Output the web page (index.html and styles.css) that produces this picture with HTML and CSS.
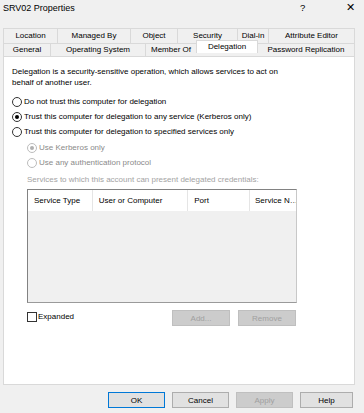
FILE: index.html
```html
<!DOCTYPE html>
<html lang="en">
<head>
    <meta charset="UTF-8">
    <title>SRV02 Properties</title>
    <link rel="stylesheet" href="styles.css">
</head>
<body>
    <div class="window">
        <div class="title-bar">
            <span class="title">SRV02 Properties</span>
            <span class="title-help">?</span>
            <span class="title-close">&#x2715;</span>
        </div>

        <div class="tabs">
            <div class="tab-row">
                <div class="tab w-location">Location</div>
                <div class="tab w-managed">Managed By</div>
                <div class="tab w-object">Object</div>
                <div class="tab w-security">Security</div>
                <div class="tab w-dialin">Dial-in</div>
                <div class="tab w-attr">Attribute Editor</div>
            </div>
            <div class="tab-row">
                <div class="tab w-general">General</div>
                <div class="tab w-os">Operating System</div>
                <div class="tab w-member">Member Of</div>
                <div class="tab w-deleg active">Delegation</div>
                <div class="tab w-pwd">Password Replication</div>
            </div>
        </div>

        <div class="panel">
            <p class="intro">Delegation is a security-sensitive operation, which allows services to act on behalf of another user.</p>

            <div class="options">
                <div class="radio"><span class="dot"></span>Do not trust this computer for delegation</div>
                <div class="radio"><span class="dot checked"></span>Trust this computer for delegation to any service (Kerberos only)</div>
                <div class="radio"><span class="dot"></span>Trust this computer for delegation to specified services only</div>
            </div>

            <div class="sub-options">
                <div class="radio disabled"><span class="dot checked"></span>Use Kerberos only</div>
                <div class="radio disabled"><span class="dot"></span>Use any authentication protocol</div>
            </div>

            <div class="list-label">Services to which this account can present delegated credentials:</div>
            <div class="list">
                <div class="list-head">
                    <div class="col c-type">Service Type</div>
                    <div class="col c-user">User or Computer</div>
                    <div class="col c-port">Port</div>
                    <div class="col c-name">Service N&#8230;</div>
                </div>
            </div>

            <div class="list-actions">
                <label class="check"><span class="box"></span>Expanded</label>
                <div class="list-buttons">
                    <button class="btn disabled">Add...</button>
                    <button class="btn disabled">Remove</button>
                </div>
            </div>
        </div>

        <div class="footer">
            <button class="btn default">OK</button>
            <button class="btn">Cancel</button>
            <button class="btn disabled">Apply</button>
            <button class="btn">Help</button>
        </div>
    </div>
</body>
</html>
```

FILE: styles.css
```css
* {
    margin: 0;
    padding: 0;
    box-sizing: border-box;
}

body {
    background: #f0f0f0;
    font-family: 'Liberation Sans', Arial, sans-serif;
    font-size: 8px;
    color: #000;
}

.window {
    width: 364px;
    height: 413px;
}

/* title bar */
.title-bar {
    display: flex;
    align-items: center;
    height: 15px;
    padding-left: 3px;
}

.title {
    flex: 1;
    font-size: 9px;
}

.title-help {
    width: 16px;
    font-size: 9.5px;
    margin-right: 30px;
}

.title-close {
    width: 18px;
    font-size: 11px;
}

/* tabs */
.tabs {
    margin: 13px 9px 0 3px;
}

.tab-row {
    display: flex;
}

.tab {
    height: 15px;
    line-height: 13px;
    text-align: center;
    border: 1px solid #d9d9d9;
    border-right: none;
    border-bottom: none;
    background: #f0f0f0;
    white-space: nowrap;
}

.tab:last-child {
    border-right: 1px solid #d9d9d9;
}

.tab-row + .tab-row .tab {
    height: 13px;
    line-height: 12px;
}

.tab.active {
    position: relative;
    z-index: 2;
    height: 17px;
    margin-top: -3px;
    line-height: 13px;
    background: #fff;
    border-right: 1px solid #d9d9d9;
}

.tab.active + .tab {
    border-left: none;
}

.w-location { width: 54px; }
.w-managed { width: 73px; }
.w-object { width: 47px; }
.w-security { width: 60px; }
.w-dialin { width: 31px; }
.w-attr { width: 87px; }

.w-general { width: 47px; }
.w-os { width: 95px; }
.w-member { width: 51px; }
.w-deleg { width: 62px; }
.w-pwd { width: 97px; }

/* panel */
.panel {
    position: relative;
    margin: 0 9px 0 3px;
    height: 329px;
    background: #fff;
    border: 1px solid #d9d9d9;
    padding: 9px 8px 0 8px;
}

.intro {
    line-height: 11px;
    width: 280px;
}

.options {
    margin-top: 6px;
}

.radio {
    display: flex;
    align-items: center;
    height: 15px;
}

.dot {
    width: 10px;
    height: 10px;
    border: 1px solid #333;
    border-radius: 50%;
    margin-right: 2px;
    display: flex;
    align-items: center;
    justify-content: center;
}

.dot.checked::after {
    content: '';
    width: 4px;
    height: 4px;
    border-radius: 50%;
    background: #000;
}

.sub-options {
    margin-top: 1px;
    padding-left: 15px;
}

.radio.disabled {
    color: #8a8a8a;
}

.radio.disabled .dot {
    border-color: #bcbcbc;
}

.radio.disabled .dot.checked::after {
    background: #b0b0b0;
}

.list-label {
    margin-top: 5px;
    padding-left: 15px;
    color: #a3a3a3;
    height: 11px;
}

.list {
    margin: 3px 0 0 15px;
    width: 270px;
    height: 114px;
    border: 1px solid #828282;
    border-color: #828282 #c8c8c8 #9a9a9a #828282;
    background: #f0f0f0;
    overflow: hidden;
}

.list-head {
    display: flex;
    height: 21px;
    background: #fff;
}

.col {
    padding-left: 6px;
    line-height: 21px;
    border-right: 1px solid #e5e5e5;
    white-space: nowrap;
}

.c-type { width: 65px; }
.c-user { width: 96px; }
.c-port { width: 62px; }
.c-name { width: 46px; padding-left: 5px; border-right: none; }

.list-actions {
    display: flex;
    align-items: center;
    margin: 7px 0 0 15px;
    width: 270px;
}

.check {
    flex: 1;
    display: flex;
    align-items: center;
    margin-top: -3px;
}

.box {
    width: 10px;
    height: 10px;
    border: 1px solid #333;
    margin-right: 1px;
}

.list-buttons {
    display: flex;
    gap: 8px;
    padding-right: 1px;
}

.list-buttons .btn {
    width: 58px;
    height: 16px;
}

/* buttons */
.btn {
    font-family: inherit;
    font-size: 8px;
    width: 57px;
    height: 16px;
    background: #e1e1e1;
    border: 1px solid #adadad;
    color: #000;
}

.btn.default {
    border-color: #0078d7;
}

.btn.disabled {
    background: #cccccc;
    border-color: #bfbfbf;
    color: #a0a0a0;
}

.footer {
    display: flex;
    justify-content: flex-end;
    gap: 7px;
    padding: 7px 11px 0 0;
}

.footer .btn:last-child {
    width: 53px;
}
```
